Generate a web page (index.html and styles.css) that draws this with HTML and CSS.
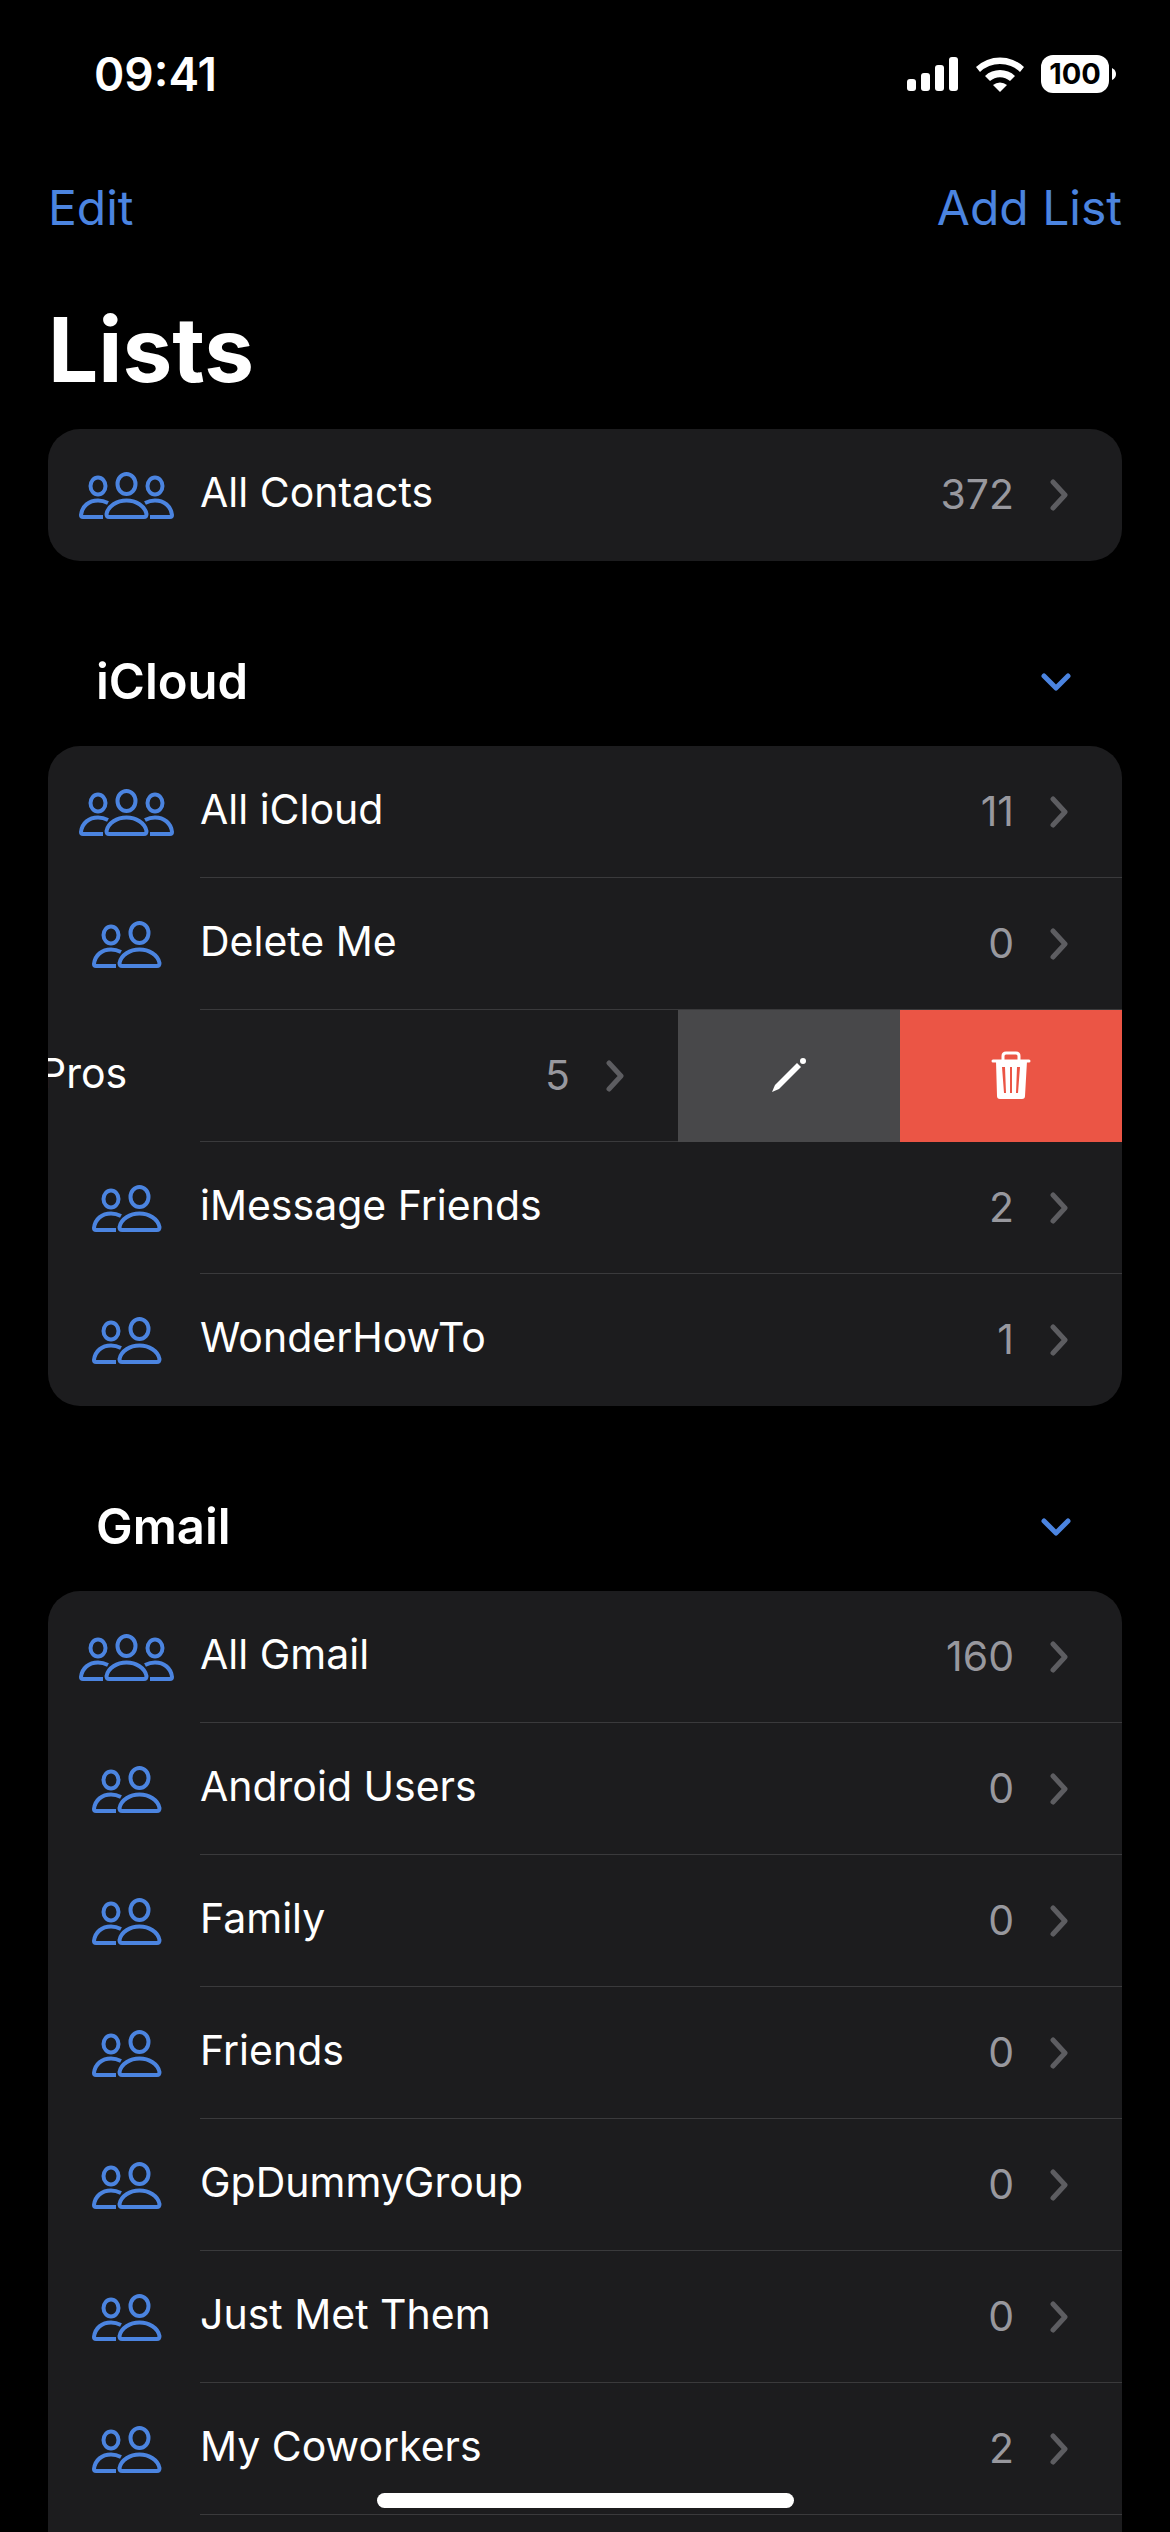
FILE: index.html
```html
<!DOCTYPE html>
<html lang="en">
<head>
<meta charset="utf-8">
<meta name="viewport" content="width=device-width, initial-scale=1">
<title>Lists</title>
<link rel="stylesheet" href="styles.css">
</head>
<body>
<svg class="defs" aria-hidden="true">
  <symbol id="people-3" viewBox="0 0 96 48">
    <ellipse cx="19" cy="14" rx="7.500" ry="8.500"/>
    <ellipse cx="47.500" cy="12" rx="9" ry="10"/>
    <ellipse cx="76" cy="14" rx="7.500" ry="8.500"/>
    <path d="M24 45H4Q2 45 2 43C3 34 10 28.500 19 28.500Q24 28.500 29 31"/>
    <path d="M71 45H91Q93 45 93 43C92 34 85 28.500 76 28.500Q71 28.500 66 31"/>
    <path d="M30 45H65Q67.500 45 67.500 42C66 34 57 28.500 47.500 28.500S29 34 27.500 42Q27.500 45 30 45Z"/>
  </symbol>
  <symbol id="people-2" viewBox="0 0 70 48">
    <ellipse cx="19" cy="14" rx="7.500" ry="8.500"/>
    <ellipse cx="47.500" cy="12" rx="9" ry="10"/>
    <path d="M24 45H4Q2 45 2 43C3 34 10 28.500 19 28.500Q24 28.500 29 31"/>
    <path d="M30 45H65Q67.500 45 67.500 42C66 34 57 28.500 47.500 28.500S29 34 27.500 42Q27.500 45 30 45Z"/>
  </symbol>
  <symbol id="chevron" viewBox="0 0 18 32"><path d="M3 3L15 16L3 29"/></symbol>
  <symbol id="chevron-down" viewBox="0 0 30 18"><path d="M3 3L15 15L27 3"/></symbol>
</svg>

<header class="status">
  <time class="clock">09:41</time>
  <div class="indicators">
    <svg class="signal" viewBox="0 0 52 36" aria-label="Signal"><rect x="0" y="23" width="9" height="12" rx="3"/><rect x="14" y="17" width="9" height="18" rx="3"/><rect x="28" y="9" width="9" height="26" rx="3"/><rect x="42" y="1" width="9" height="34" rx="3"/></svg>
    <svg class="wifi" viewBox="0 0 50 36" aria-label="Wi-Fi"><path d="M1 11A35 35 0 0 1 49 11L45 16A29 29 0 0 0 5 16Z"/><path d="M10 20A22 22 0 0 1 40 20L35 25A15 15 0 0 0 15 25Z"/><path d="M18 29A11 11 0 0 1 32 29L25 36Z"/></svg>
    <div class="battery"><span class="level">100</span><svg class="cap" viewBox="0 0 4 12" aria-hidden="true"><path d="M0 0Q4 2 4 6T0 12Z"/></svg></div>
  </div>
</header>

<nav class="toolbar">
  <button class="link" type="button">Edit</button>
  <button class="link" type="button">Add List</button>
</nav>

<main class="content">
  <h1 class="title">Lists</h1>

  <ul class="card">
    <li class="row"><a class="item" href="#"><span class="icon"><svg class="trio"><use href="#people-3"/></svg></span><span class="body"><span class="name">All Contacts</span><span class="count">372</span><svg class="chevron"><use href="#chevron"/></svg></span></a></li>
  </ul>

  <section class="group">
    <div class="group-head"><h2 class="group-title">iCloud</h2><button class="toggle" type="button" aria-label="Collapse iCloud"><svg class="down"><use href="#chevron-down"/></svg></button></div>
    <ul class="card">
      <li class="row"><a class="item" href="#"><span class="icon"><svg class="trio"><use href="#people-3"/></svg></span><span class="body"><span class="name">All iCloud</span><span class="count">11</span><svg class="chevron"><use href="#chevron"/></svg></span></a></li>
      <li class="row"><a class="item" href="#"><span class="icon"><svg class="duo"><use href="#people-2"/></svg></span><span class="body"><span class="name">Delete Me</span><span class="count">0</span><svg class="chevron"><use href="#chevron"/></svg></span></a></li>
      <li class="row swiped"><a class="item" href="#"><span class="body"><span class="name">Pros</span><span class="count">5</span><svg class="chevron"><use href="#chevron"/></svg></span></a>
        <button class="action rename" type="button" aria-label="Rename"><svg class="pencil" viewBox="0 0 34 34"><path d="M0 34L3 27L25 5L29 9L7 31Z"/><circle cx="31" cy="3" r="3"/></svg></button>
        <button class="action delete" type="button" aria-label="Delete"><svg class="trash" viewBox="0 0 40 48"><path class="outline" d="M12 10V5Q12 2 15 2H25Q28 2 28 5V10M2 10H38"/><path fill-rule="evenodd" d="M5 10H36L34 45Q34 48 31 48H9Q6 48 6 45ZM11 16L13 42H15L14 16ZM19 16V42H21V16ZM26 16L25 42H27L29 16Z"/></svg></button></li>
      <li class="row"><a class="item" href="#"><span class="icon"><svg class="duo"><use href="#people-2"/></svg></span><span class="body"><span class="name">iMessage Friends</span><span class="count">2</span><svg class="chevron"><use href="#chevron"/></svg></span></a></li>
      <li class="row"><a class="item" href="#"><span class="icon"><svg class="duo"><use href="#people-2"/></svg></span><span class="body"><span class="name">WonderHowTo</span><span class="count">1</span><svg class="chevron"><use href="#chevron"/></svg></span></a></li>
    </ul>
  </section>

  <section class="group open">
    <div class="group-head"><h2 class="group-title">Gmail</h2><button class="toggle" type="button" aria-label="Collapse Gmail"><svg class="down"><use href="#chevron-down"/></svg></button></div>
    <ul class="card">
      <li class="row"><a class="item" href="#"><span class="icon"><svg class="trio"><use href="#people-3"/></svg></span><span class="body"><span class="name">All Gmail</span><span class="count">160</span><svg class="chevron"><use href="#chevron"/></svg></span></a></li>
      <li class="row"><a class="item" href="#"><span class="icon"><svg class="duo"><use href="#people-2"/></svg></span><span class="body"><span class="name">Android Users</span><span class="count">0</span><svg class="chevron"><use href="#chevron"/></svg></span></a></li>
      <li class="row"><a class="item" href="#"><span class="icon"><svg class="duo"><use href="#people-2"/></svg></span><span class="body"><span class="name">Family</span><span class="count">0</span><svg class="chevron"><use href="#chevron"/></svg></span></a></li>
      <li class="row"><a class="item" href="#"><span class="icon"><svg class="duo"><use href="#people-2"/></svg></span><span class="body"><span class="name">Friends</span><span class="count">0</span><svg class="chevron"><use href="#chevron"/></svg></span></a></li>
      <li class="row"><a class="item" href="#"><span class="icon"><svg class="duo"><use href="#people-2"/></svg></span><span class="body"><span class="name">GpDummyGroup</span><span class="count">0</span><svg class="chevron"><use href="#chevron"/></svg></span></a></li>
      <li class="row"><a class="item" href="#"><span class="icon"><svg class="duo"><use href="#people-2"/></svg></span><span class="body"><span class="name">Just Met Them</span><span class="count">0</span><svg class="chevron"><use href="#chevron"/></svg></span></a></li>
      <li class="row"><a class="item" href="#"><span class="icon"><svg class="duo"><use href="#people-2"/></svg></span><span class="body"><span class="name">My Coworkers</span><span class="count">2</span><svg class="chevron"><use href="#chevron"/></svg></span></a></li>
    </ul>
  </section>
</main>
<div class="home-indicator"></div>
</body>
</html>
```
FILE: styles.css
```css
* { box-sizing: border-box; }

html { height: 100%; }

body {
  margin: 0;
  height: 100%;
  overflow: hidden;
  display: flex;
  flex-direction: column;
  background: #000;
  color: #fff;
  font-family: Inter, "Liberation Sans", sans-serif;
}

button {
  margin: 0;
  padding: 0;
  border: 0;
  background: none;
  color: inherit;
  font: inherit;
}

svg { display: block; }

.defs {
  position: absolute;
  width: 0;
  height: 0;
}

.status {
  flex: none;
  display: flex;
  justify-content: space-between;
  align-items: center;
  height: 148px;
  padding: 0 54px 0 94px;
}

.clock {
  font-size: 46px;
  font-weight: 600;
  line-height: 56px;
}

.indicators {
  display: flex;
  align-items: center;
  gap: 16px;
  fill: #fff;
}

.signal { width: 52px; height: 36px; }
.wifi { width: 50px; height: 36px; }

.battery {
  display: flex;
  align-items: center;
  gap: 3px;
}

.level {
  width: 68px;
  border-radius: 12px;
  background: #fff;
  color: #000;
  font-size: 29px;
  font-weight: 700;
  line-height: 38px;
  text-align: center;
}

.cap { width: 4px; height: 12px; }

.toolbar {
  flex: none;
  display: flex;
  justify-content: space-between;
  padding: 30px 48px 28px;
}

.link {
  color: #4b84e0;
  font-size: 48px;
  line-height: 60px;
}

.content {
  flex: 1;
  min-height: 0;
  display: flex;
  flex-direction: column;
  padding: 28px 48px 0;
}

.title {
  margin: 0;
  padding-bottom: 23px;
  font-size: 89px;
  font-weight: 700;
  line-height: 112px;
}

.card {
  flex: none;
  margin: 0;
  padding: 0;
  overflow: hidden;
  border-radius: 32px;
  background: #1c1c1e;
  list-style: none;
}

.group { flex: none; }

/* The last group runs on past the bottom of the screen. */
.open {
  flex: 1 0 auto;
  display: flex;
  flex-direction: column;
}

.open .card {
  flex: 1 0 auto;
  border-radius: 32px 32px 0 0;
}

.group-head {
  display: flex;
  justify-content: space-between;
  align-items: center;
  height: 185px;
  padding: 56px 50px 0 48px;
}

.group-title {
  margin: 0;
  font-size: 49px;
  font-weight: 600;
  line-height: 60px;
}

.toggle { color: #4b84e0; }
.down { width: 32px; height: 18px; }

.down, .chevron {
  fill: none;
  stroke: currentColor;
  stroke-width: 5px;
  stroke-linecap: round;
  stroke-linejoin: round;
}

.row {
  display: flex;
  background: linear-gradient(#3a3a3c, #3a3a3c) 152px 100% / 100% 1px no-repeat;
}

.row:last-child { background: none; }

.open .row:last-child {
  background: linear-gradient(#3a3a3c, #3a3a3c) 152px 100% / 100% 1px no-repeat;
}

.item {
  flex: 1;
  min-width: 0;
  display: flex;
  color: inherit;
  text-decoration: none;
}

.icon {
  flex: none;
  display: flex;
  justify-content: center;
  width: 152px;
  padding: 43px 0 0 6px;
  color: #4b84e0;
  fill: none;
  stroke: currentColor;
  stroke-width: 4px;
}

.trio { width: 96px; height: 48px; }
.duo { width: 70px; height: 48px; }

.body {
  flex: 1;
  display: flex;
  align-items: center;
  height: 132px;
  padding: 0 54px 4px 0;
}

.name {
  flex: 1;
  padding-bottom: 2px;
  font-size: 41px;
  line-height: 52px;
}

.count {
  padding-top: 2px;
  color: #98989e;
  font-size: 41px;
  line-height: 52px;
}

.chevron {
  width: 18px;
  height: 36px;
  margin-left: 36px;
  padding-top: 4px;
  color: #5d5d61;
}

.swiped .name { margin-left: -8px; }

.action {
  width: 222px;
  display: flex;
  justify-content: center;
  align-items: center;
  padding-bottom: 2px;
  fill: #fff;
}

.rename { background: #48484a; }
.delete { background: #eb5545; }
.pencil { width: 34px; height: 34px; }
.trash { width: 40px; height: 48px; }
.outline { fill: none; stroke: #fff; stroke-width: 3px; stroke-linecap: round; }

.home-indicator {
  position: fixed;
  bottom: 24px;
  left: 50%;
  width: 417px;
  height: 15px;
  margin-left: -208px;
  border-radius: 8px;
  background: #fff;
}
```
